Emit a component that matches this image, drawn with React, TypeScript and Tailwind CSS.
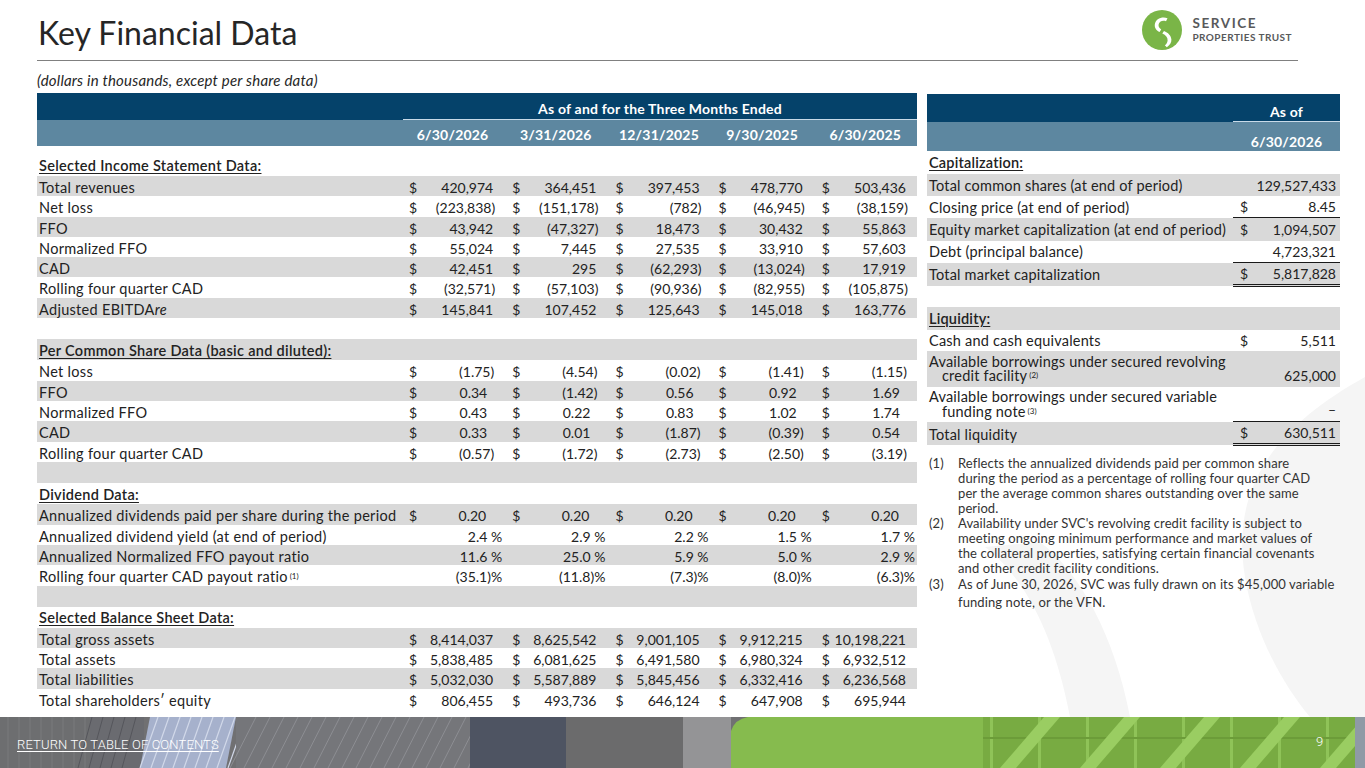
import React from 'react';

type Kind = 'k' | 'ps' | 'pct' | 'div';
type DataRow = { t: 'data'; label: React.ReactNode; vals: string[]; dollar: boolean; kind: Kind };
type SecRow = { t: 'sec'; label: string; first?: boolean };
type BlankRow = { t: 'blank' };
type LRow = DataRow | SecRow | BlankRow;

const sec = (label: string, first = false): SecRow => ({ t: 'sec', label, first });
const blank: BlankRow = { t: 'blank' };
const d = (label: React.ReactNode, vals: string[], kind: Kind = 'k', dollar = true): DataRow => ({
  t: 'data',
  label,
  vals,
  kind,
  dollar,
});

const Sup = ({ n }: { n: string }) => (
  <span className="relative -top-[3px] ml-[2px] text-[8px] leading-none tracking-normal">({n})</span>
);

const leftRows: LRow[] = [
  sec('Selected Income Statement Data:', true),
  d('Total revenues', ['420,974', '364,451', '397,453', '478,770', '503,436']),
  d('Net loss', ['(223,838)', '(151,178)', '(782)', '(46,945)', '(38,159)']),
  d('FFO', ['43,942', '(47,327)', '18,473', '30,432', '55,863']),
  d('Normalized FFO', ['55,024', '7,445', '27,535', '33,910', '57,603']),
  d('CAD', ['42,451', '295', '(62,293)', '(13,024)', '17,919']),
  d('Rolling four quarter CAD', ['(32,571)', '(57,103)', '(90,936)', '(82,955)', '(105,875)']),
  d(
    <>
      Adjusted EBITDA<span className="italic">re</span>
    </>,
    ['145,841', '107,452', '125,643', '145,018', '163,776']
  ),
  blank,
  sec('Per Common Share Data (basic and diluted):'),
  d('Net loss', ['(1.75)', '(4.54)', '(0.02)', '(1.41)', '(1.15)'], 'ps'),
  d('FFO', ['0.34', '(1.42)', '0.56', '0.92', '1.69'], 'ps'),
  d('Normalized FFO', ['0.43', '0.22', '0.83', '1.02', '1.74'], 'ps'),
  d('CAD', ['0.33', '0.01', '(1.87)', '(0.39)', '0.54'], 'ps'),
  d('Rolling four quarter CAD', ['(0.57)', '(1.72)', '(2.73)', '(2.50)', '(3.19)'], 'ps'),
  blank,
  sec('Dividend Data:'),
  d('Annualized dividends paid per share during the period', ['0.20', '0.20', '0.20', '0.20', '0.20'], 'div'),
  d('Annualized dividend yield (at end of period)', ['2.4 %', '2.9 %', '2.2 %', '1.5 %', '1.7 %'], 'pct', false),
  d('Annualized Normalized FFO payout ratio', ['11.6 %', '25.0 %', '5.9 %', '5.0 %', '2.9 %'], 'pct', false),
  d(
    <>
      Rolling four quarter CAD payout ratio
      <Sup n="1" />
    </>,
    ['(35.1)%', '(11.8)%', '(7.3)%', '(8.0)%', '(6.3)%'],
    'pct',
    false
  ),
  blank,
  sec('Selected Balance Sheet Data:'),
  d('Total gross assets', ['8,414,037', '8,625,542', '9,001,105', '9,912,215', '10,198,221']),
  d('Total assets', ['5,838,485', '6,081,625', '6,491,580', '6,980,324', '6,932,512']),
  d('Total liabilities', ['5,032,030', '5,587,889', '5,845,456', '6,332,416', '6,236,568']),
  d('Total shareholders\u2032 equity', ['806,455', '493,736', '646,124', '647,908', '695,944']),
];

function pad(v: string, kind: Kind) {
  const neg = v.endsWith(')');
  if (kind === 'pct') return 'pr-[2px]';
  if (kind === 'div') return 'pr-[18px]';
  if (kind === 'ps') return neg ? 'pr-[10px]' : 'pr-[17px]';
  return neg ? 'pr-[9px]' : 'pr-[11px]';
}

const dates = ['6/30/2026', '3/31/2026', '12/31/2025', '9/30/2025', '6/30/2025'];

function LeftTable() {
  return (
    <div className="w-[880px] shrink-0">
      <div className="h-[27px] bg-[#05426a] grid grid-cols-[366px_1fr]">
        <div />
        <div className="border-b-[1.5px] border-[#c8dae8] flex items-center justify-center pt-[6px] text-white font-bold text-[14px] tracking-[0.2px] leading-none">
          As of and for the Three Months Ended
        </div>
      </div>
      <div className="h-[26px] bg-[#5d87a0] grid grid-cols-[364px_repeat(5,103.2px)] text-white font-bold text-[14px] tracking-[0.2px]">
        <div />
        {dates.map((dt) => (
          <div key={dt} className="flex items-center justify-center pt-[4px] leading-none">
            {dt}
          </div>
        ))}
      </div>
      {leftRows.map((r, i) => {
        const bg = i % 2 === 1 ? 'bg-[#d9d9d9]' : '';
        if (r.t === 'sec')
          return (
            <div
              key={i}
              className={`${r.first ? 'h-[30px] items-end' : 'h-[21.2px] items-center pt-[2px]'} flex pl-[2px] ${bg}`}
            >
              <span className="font-semibold underline underline-offset-[2px] decoration-[1px] leading-[20px] text-[14.5px] tracking-[0.3px]">
                {r.label}
              </span>
            </div>
          );
        if (r.t === 'blank') return <div key={i} className={`h-[21.2px] ${bg}`} />;
        return (
          <div
            key={i}
            className={`grid grid-cols-[364px_repeat(5,103.2px)] h-[20.3px] items-center leading-[20px] pt-[2px] ${bg}`}
          >
            <div className="pl-[2px] whitespace-nowrap text-[14.5px] tracking-[0.3px]">{r.label}</div>
            {r.vals.map((v, j) => (
              <div key={j} className={`flex justify-between pl-[8px] ${pad(v, r.kind)}`}>
                <span>{r.dollar ? '$' : ''}</span>
                <span className="whitespace-nowrap">{v}</span>
              </div>
            ))}
          </div>
        );
      })}
    </div>
  );
}

type RRow = {
  label?: React.ReactNode;
  sec?: boolean;
  blank?: boolean;
  dollar?: boolean;
  v?: string;
  h: string;
  line?: 'single' | 'double';
  two?: boolean;
};

const rightRows: RRow[] = [
  { label: 'Capitalization:', sec: true, h: 'h-[23px]' },
  { label: 'Total common shares (at end of period)', v: '129,527,433', h: 'h-[22.2px]' },
  { label: 'Closing price (at end of period)', v: '8.45', dollar: true, h: 'h-[22.2px]', line: 'single' },
  { label: 'Equity market capitalization (at end of period)', v: '1,094,507', dollar: true, h: 'h-[22.2px]' },
  { label: 'Debt (principal balance)', v: '4,723,321', h: 'h-[22.2px]', line: 'single' },
  { label: 'Total market capitalization', v: '5,817,828', dollar: true, h: 'h-[23px]', line: 'double' },
  { blank: true, h: 'h-[21px]' },
  { label: 'Liquidity:', sec: true, h: 'h-[23px]' },
  { label: 'Cash and cash equivalents', v: '5,511', dollar: true, h: 'h-[21.5px]' },
  {
    label: (
      <>
        Available borrowings under secured revolving
        <br />
        <span className="pl-[13px]">
          credit facility
          <Sup n="2" />
        </span>
      </>
    ),
    v: '625,000',
    h: 'h-[36px]',
    two: true,
  },
  {
    label: (
      <>
        Available borrowings under secured variable
        <br />
        <span className="pl-[13px]">
          funding note
          <Sup n="3" />
        </span>
      </>
    ),
    v: '\u2013',
    h: 'h-[35px]',
    two: true,
    line: 'single',
  },
  { label: 'Total liquidity', v: '630,511', dollar: true, h: 'h-[23px]', line: 'double' },
];

function RightTable() {
  return (
    <div className="w-[413px] shrink-0 mt-[1px]">
      <div className="h-[28px] bg-[#05426a] grid grid-cols-[306px_107px]">
        <div />
        <div className="border-b-[1.5px] border-[#c8dae8] flex items-center justify-center pt-[9px] text-white font-bold text-[14px] tracking-[0.2px] leading-none">
          As of
        </div>
      </div>
      <div className="h-[29px] bg-[#5d87a0] grid grid-cols-[306px_107px] text-white font-bold text-[14px] tracking-[0.2px]">
        <div />
        <div className="flex items-center justify-center pt-[10px] leading-none">6/30/2026</div>
      </div>
      {rightRows.map((r, i) => {
        const bg = i % 2 === 1 ? 'bg-[#d9d9d9]' : '';
        if (r.blank) return <div key={i} className={`${r.h} ${bg}`} />;
        if (r.sec)
          return (
            <div key={i} className={`${r.h} ${bg} flex items-center pl-[2px] pt-[1px]`}>
              <span className="font-semibold underline underline-offset-[2px] decoration-[1px] leading-[20px] text-[14.5px] tracking-[0.2px]">
                {r.label}
              </span>
            </div>
          );
        const lineCls =
          r.line === 'single'
            ? 'border-b-[1px] border-[#1a1a1a]'
            : r.line === 'double'
            ? 'border-b-[3px] border-double border-[#1a1a1a]'
            : '';
        return (
          <div key={i} className={`${r.h} ${bg} grid grid-cols-[306px_107px]`}>
            <div
              className={`pl-[2px] flex items-center whitespace-nowrap text-[14.5px] tracking-[0.2px] ${
                r.two ? 'leading-[14.5px]' : 'leading-[20px] pt-[1px]'
              }`}
            >
              <div>{r.label}</div>
            </div>
            <div
              className={`flex justify-between pl-[7px] pr-[4px] leading-[20px] ${
                r.two ? 'items-end pb-[1px]' : 'items-center pt-[1px]'
              } ${lineCls}`}
            >
              <span>{r.dollar ? '$' : ''}</span>
              <span>{r.v}</span>
            </div>
          </div>
        );
      })}
      <div className="mt-[11px] pl-[2px] text-[13px] tracking-[0.1px] text-[#333] whitespace-nowrap">
        <div className="grid grid-cols-[29px_1fr] leading-[14.8px]">
          <div>(1)</div>
          <div>
            Reflects the annualized dividends paid per common share
            <br />
            during the period as a percentage of rolling four quarter CAD
            <br />
            per the average common shares outstanding over the same
            <br />
            period.
          </div>
        </div>
        <div className="grid grid-cols-[29px_1fr] leading-[14.8px] mt-[1px]">
          <div>(2)</div>
          <div>
            Availability under SVC&apos;s revolving credit facility is subject to
            <br />
            meeting ongoing minimum performance and market values of
            <br />
            the collateral properties, satisfying certain financial covenants
            <br />
            and other credit facility conditions.
          </div>
        </div>
        <div className="grid grid-cols-[29px_1fr] leading-[18px] -mt-[1px]">
          <div>(3)</div>
          <div>
            As of June 30, 2026, SVC was fully drawn on its $45,000 variable
            <br />
            funding note, or the VFN.
          </div>
        </div>
      </div>
    </div>
  );
}

function Logo() {
  return (
    <div className="flex items-start mt-[10px] mr-[6px]">
      <svg width="40" height="40" viewBox="0 0 40 40">
        <circle cx="20" cy="20" r="20" fill="#7ab547" />
        <path
          d="M25.5 8.2 C 20 6.2, 13.5 8.8, 12.8 14.5 C 12.4 18, 14.5 20.6, 17.6 22 L 19.2 19.4 C 17.2 18.3, 16.3 16.6, 16.6 14.6 C 17.1 11.3, 20.6 10, 24 11.2 Z"
          fill="#fff"
        />
        <path
          d="M20.3 23.4 C 23.8 25, 25.8 27.4, 25.6 30.4 C 25.4 32.6, 24.4 34.2, 22.8 35.2 L 24.8 37.2 C 27.8 35.4, 29.6 32.6, 29.4 29.6 C 29.2 25.6, 26 22.6, 22 21 Z"
          fill="#fff"
        />
      </svg>
      <div className="ml-[10px] pt-[7px] text-[#58595b] font-bold">
        <div className="text-[13.5px] leading-[13px] tracking-[1.6px]">SERVICE</div>
        <div className="text-[10px] leading-[10px] tracking-[0.45px] mt-[2px]">PROPERTIES TRUST</div>
      </div>
    </div>
  );
}

function Watermark() {
  return (
    <svg
      className="absolute left-[945px] top-[317px] z-0"
      width="420"
      height="400"
      viewBox="0 0 420 400"
    >
      <path d="M40 230 C 80 260, 110 320, 125 400 L 185 400 C 170 320, 135 255, 95 225 Z" fill="#f5f5f5" />
      <path d="M420 60 C 330 110, 285 170, 300 260 C 310 320, 340 370, 365 400 L 420 400 Z" fill="#f5f5f5" />
    </svg>
  );
}

function Footer() {
  const glass = Array.from({ length: 9 }, (_, i) => 140 + i * 11);
  const grey = Array.from({ length: 18 }, (_, i) => 230 + i * 14);
  const mull = Array.from({ length: 8 }, (_, i) => 990 + i * 48);
  return (
    <div className="relative h-[51px] w-full overflow-hidden shrink-0">
      <svg className="absolute inset-0" width="1365" height="51" viewBox="0 0 1365 51">
        <rect x="0" y="0" width="1365" height="51" fill="#707072" />
        <rect x="0" y="0" width="90" height="51" fill="#6d6e70" />
        {Array.from({ length: 8 }, (_, i) => (
          <line key={i} x1={8 + i * 11} y1="0" x2={8 + i * 11} y2="51" stroke="#7a7b7d" strokeWidth="1" />
        ))}
        <rect x="90" y="0" width="54" height="51" fill="#6a6b70" />
        <polygon points="150,0 236,0 226,51 140,51" fill="#a6b1cc" />
        {glass.map((x, i) => (
          <line key={i} x1={x + 18} y1="0" x2={x} y2="51" stroke="#d2d9ea" strokeWidth="1.2" />
        ))}
        {Array.from({ length: 5 }, (_, i) => (
          <line key={i} x1={92 + i * 11} y1="0" x2={78 + i * 11} y2="51" stroke="#55565b" strokeWidth="1" />
        ))}
        <rect x="236" y="0" width="234" height="51" fill="#75767a" />
        {grey.map((x, i) => (
          <line key={i} x1={x + 26} y1="0" x2={x} y2="51" stroke="#8d8e93" strokeWidth="1" />
        ))}
        <rect x="470" y="0" width="96" height="51" fill="#4e5462" />
        <rect x="566" y="0" width="117" height="51" fill="#6b6b6c" />
        <rect x="683" y="0" width="48" height="51" fill="#949496" />
        <path d="M731 51 L731 14 Q735 2 748 0 L1365 0 L1365 51 Z" fill="#86bb4e" />
        <rect x="983" y="0" width="372" height="51" fill="#78ab42" />
        {mull.map((x, i) => (
          <rect key={i} x={x} y="0" width="3" height="51" fill="#8fc358" />
        ))}
        <rect x="983" y="20" width="372" height="2" fill="#6c9c39" />
        {Array.from({ length: 5 }, (_, i) => (
          <polygon
            key={i}
            points={`${1000 + i * 80},51 ${1016 + i * 80},51 ${1060 + i * 80},0 ${1044 + i * 80},0`}
            fill="#9acd62"
          />
        ))}
        <rect x="1355" y="0" width="10" height="51" fill="#8f9aa6" />
      </svg>
      <div className="absolute left-[17px] top-[21px] font-[family-name:Roboto,sans-serif] font-light text-[13px] tracking-[0.15px] leading-[14px] text-white underline underline-offset-[2px]">
        RETURN TO TABLE OF CONTENTS
      </div>
      <div className="absolute left-[1316px] top-[18px] font-[family-name:Roboto,sans-serif] font-light text-[13px] leading-[14px] text-white">
        9
      </div>
    </div>
  );
}

export default function App() {
  return (
    <div className="w-[1365px] h-[768px] overflow-hidden bg-white flex flex-col font-[family-name:Lato,sans-serif] text-[14px] text-[#222]">
      <div className="relative flex-1 h-[717px]">
        <Watermark />
        <div className="relative z-10">
          <div className="ml-[37px] w-[1261px] h-[61px] border-b-[1.5px] border-[#808080] flex justify-between items-start">
            <div className="pt-[14px] text-[32px] leading-[1.2] text-[#262626] pl-[1px]">Key Financial Data</div>
            <Logo />
          </div>
          <div className="ml-[37px] mt-[9px] h-[20px] leading-[20px] italic text-[15px] tracking-[0.2px] text-[#262626]">
            (dollars in thousands, except per share data)
          </div>
          <div className="ml-[37px] mt-[3px] flex gap-[10px] items-start">
            <LeftTable />
            <RightTable />
          </div>
        </div>
      </div>
      <Footer />
    </div>
  );
}
